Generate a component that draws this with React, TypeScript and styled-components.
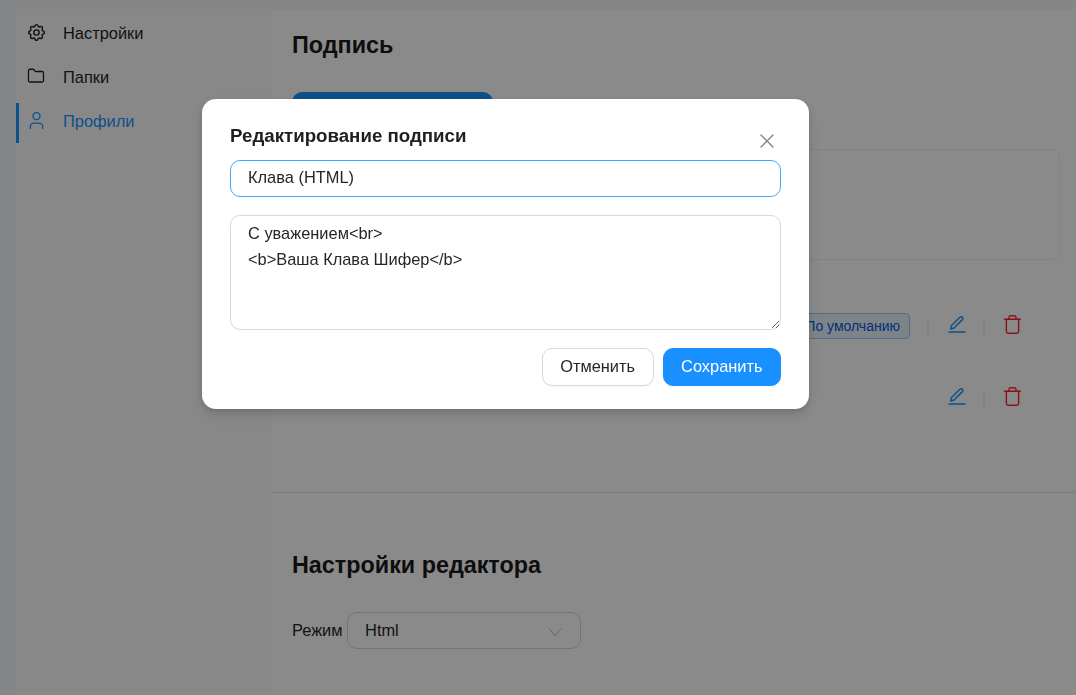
import React from "react";
import styled, { createGlobalStyle } from "styled-components";
import { Folder, User, X } from "lucide-react";
import { FiTrash } from "react-icons/fi";
import { TbSettings } from "react-icons/tb";

const GlobalStyle = createGlobalStyle`
  html, body {
    margin: 0;
    padding: 0;
    height: 100%;
    overflow: hidden;
    background: #f5f7fa;
    font-family: "Liberation Sans", Arial, sans-serif;
    color: #1f1f1f;
  }
`;

const Page = styled.div`
  display: flex;
  height: 695px;
  padding: 10px 0 0 16px;
  box-sizing: border-box;
`;

const Sidebar = styled.nav`
  width: 256px;
  flex-shrink: 0;
  padding-top: 5px;
  background: #fcfcfc;
`;

const NavItem = styled.a<{ $active?: boolean }>`
  display: flex;
  align-items: center;
  gap: 18px;
  height: 40px;
  margin-bottom: 4px;
  padding-bottom: 4px;
  box-sizing: border-box;
  padding-left: ${(p) => (p.$active ? "8px" : "11px")};
  border-left: ${(p) => (p.$active ? "3px solid #1a94ff" : "0")};
  font-size: 16.4px;
  color: ${(p) => (p.$active ? "#1a94ff" : "#1f1f1f")};
`;

const NavIcon = styled.span`
  display: flex;
  align-items: center;
  justify-content: center;
  width: 18px;
  height: 18px;
  margin-top: -2px;

  svg {
    flex-shrink: 0;
  }
`;

const Main = styled.main`
  flex: 1;
  background: #ffffff;
`;

const Section = styled.section<{ $bordered?: boolean }>`
  height: ${(p) => (p.$bordered ? "483px" : "auto")};
  padding: 20px 16px 0 20px;
  box-sizing: border-box;
  border-bottom: ${(p) => (p.$bordered ? "1px solid #e4e4e4" : "0")};
`;

const Heading = styled.h2`
  margin: 0;
  font-size: 23.35px;
  line-height: 30px;
  font-weight: 700;
  color: #1a1a1a;
`;

const SettingsHeading = styled(Heading)`
  margin-top: 37px;
`;

const PrimaryBar = styled.div`
  width: 201px;
  height: 40px;
  margin-top: 32px;
  border-radius: 10px;
  background: #1a94ff;
`;

const PreviewCard = styled.div`
  height: 111px;
  margin-top: 17px;
  box-sizing: border-box;
  border: 1px solid #f0f0f0;
  border-radius: 6px;
`;

const SignatureRow = styled.div<{ $offset: number }>`
  display: flex;
  justify-content: flex-end;
  align-items: center;
  height: 26px;
  margin-top: ${(p) => p.$offset}px;
  padding-right: 37px;
`;

const Badge = styled.span`
  display: flex;
  align-items: center;
  height: 26px;
  padding: 0 9px;
  box-sizing: border-box;
  border: 1px solid #91caff;
  border-radius: 4px;
  background: #e6f4ff;
  color: #0958d9;
  font-size: 14px;
`;

const Sep = styled.span`
  width: 2px;
  height: 16px;
  margin: 0 17px;
  background: #f0f0f0;
`;

const EditGlyph = styled.svg`
  width: 18px;
  height: 18px;
  margin: -4px 0 0 2px;
  fill: none;
  stroke: #1a94ff;
  stroke-width: 1.5;
  stroke-linecap: round;
  stroke-linejoin: round;
`;

const TrashIcon = styled(FiTrash)`
  width: 21px;
  height: 21px;
  margin-top: -3px;
  color: #ff2030;
  stroke-width: 1.6;
`;

const ModeRow = styled.div`
  display: flex;
  align-items: center;
  gap: 4px;
  margin-top: 32px;
  font-size: 16.4px;
  color: #262626;
`;

const SelectBox = styled.div`
  display: flex;
  align-items: center;
  justify-content: space-between;
  width: 234px;
  height: 37px;
  padding: 0 18px 0 17.5px;
  box-sizing: border-box;
  border: 1px solid #d9d9d9;
  border-radius: 10px;
`;

const ChevronGlyph = styled.svg`
  width: 14px;
  height: 10px;
  margin-top: 2px;
  fill: none;
  stroke: #c4c4c4;
  stroke-width: 1.1;
`;

const Overlay = styled.div`
  position: fixed;
  inset: 0;
  padding: 99px 0 0 202px;
  background: rgba(0, 0, 0, 0.46);
`;

const Modal = styled.div`
  position: relative;
  width: 607px;
  height: 310px;
  padding: 24px 28px 0;
  box-sizing: border-box;
  background: #ffffff;
  border-radius: 14px;
  box-shadow: 0 6px 16px rgba(0, 0, 0, 0.1), 0 3px 6px rgba(0, 0, 0, 0.12);
`;

const ModalTitle = styled.h3`
  margin: 0 0 12px;
  font-size: 18.7px;
  line-height: 25px;
  font-weight: 700;
  color: #1f1f1f;
`;

const CloseButton = styled.button`
  position: absolute;
  top: 30px;
  right: 30px;
  display: flex;
  width: 24px;
  height: 24px;
  padding: 0;
  border: 0;
  background: none;
  color: #8a8a8a;

  svg {
    width: 24px;
    height: 24px;
    stroke-width: 1.5;
  }
`;

const NameInput = styled.input`
  display: block;
  width: 100%;
  height: 37px;
  padding: 0 17px 2px;
  box-sizing: border-box;
  border: 1px solid #40a9ff;
  border-radius: 10px;
  outline: none;
  font: 16.4px "Liberation Sans", Arial, sans-serif;
  color: #262626;
`;

const BodyInput = styled.textarea`
  display: block;
  width: 100%;
  height: 115px;
  margin-top: 18px;
  padding: 4px 17px;
  box-sizing: border-box;
  border: 1px solid #d9d9d9;
  border-radius: 10px;
  outline: none;
  font: 16.4px/26px "Liberation Sans", Arial, sans-serif;
  color: #262626;
`;

const Footer = styled.div`
  display: flex;
  justify-content: flex-end;
  gap: 9px;
  margin-top: 18px;
`;

const ModalButton = styled.button<{ $primary?: boolean }>`
  height: 38px;
  padding: 0 17.5px 2px;
  box-sizing: border-box;
  border: 1px solid ${(p) => (p.$primary ? "#1890ff" : "#d9d9d9")};
  border-radius: 10px;
  background: ${(p) => (p.$primary ? "#1890ff" : "#ffffff")};
  color: ${(p) => (p.$primary ? "#ffffff" : "#262626")};
  box-shadow: 0 2px 0 rgba(0, 0, 0, 0.02);
  font: 16.4px "Liberation Sans", Arial, sans-serif;
`;

const EditIcon = () => (
  <EditGlyph viewBox="0 0 18 18">
    <path d="M1 17h16" />
    <path d="M12 2.2a1.7 1.7 0 0 1 2.4 2.4L6 13l-3.4.9.9-3.4z" />
  </EditGlyph>
);

export default function App() {
  return (
    <>
      <GlobalStyle />
      <Page>
        <Sidebar>
          <NavItem>
            <NavIcon>
              <TbSettings size={21} strokeWidth={1.6} />
            </NavIcon>
            Настройки
          </NavItem>
          <NavItem>
            <NavIcon>
              <Folder size={18} strokeWidth={1.7} />
            </NavIcon>
            Папки
          </NavItem>
          <NavItem $active>
            <NavIcon>
              <User size={21} strokeWidth={1.6} />
            </NavIcon>
            Профили
          </NavItem>
        </Sidebar>
        <Main>
          <Section $bordered>
            <Heading>Подпись</Heading>
            <PrimaryBar />
            <PreviewCard />
            <SignatureRow $offset={53}>
              <Badge>По умолчанию</Badge>
              <Sep />
              <EditIcon />
              <Sep />
              <TrashIcon />
            </SignatureRow>
            <SignatureRow $offset={46}>
              <EditIcon />
              <Sep />
              <TrashIcon />
            </SignatureRow>
          </Section>
          <Section>
            <SettingsHeading>Настройки редактора</SettingsHeading>
            <ModeRow>
              Режим
              <SelectBox>
                Html
                <ChevronGlyph viewBox="0 0 14 10">
                  <path d="M1 1.5l6 7 6-7" />
                </ChevronGlyph>
              </SelectBox>
            </ModeRow>
          </Section>
        </Main>
      </Page>
      <Overlay>
        <Modal>
          <ModalTitle>Редактирование подписи</ModalTitle>
          <CloseButton>
            <X />
          </CloseButton>
          <NameInput readOnly value="Клава (HTML)" />
          <BodyInput
            readOnly
            value={"С уважением<br>\n<b>Ваша Клава Шифер</b>"}
          />
          <Footer>
            <ModalButton>Отменить</ModalButton>
            <ModalButton $primary>Сохранить</ModalButton>
          </Footer>
        </Modal>
      </Overlay>
    </>
  );
}
